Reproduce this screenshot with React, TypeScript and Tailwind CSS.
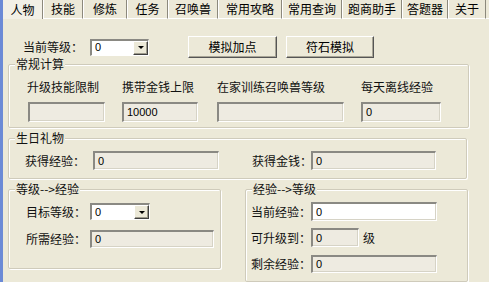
import React from 'react'

const font = "font-['Noto_Sans_CJK_SC',sans-serif]"

const tabs = [
  { label: '人物', w: 'w-[40px]' },
  { label: '技能', w: 'w-[40px]' },
  { label: '修炼', w: 'w-[44px]' },
  { label: '任务', w: 'w-[41px]' },
  { label: '召唤兽', w: 'w-[50px]' },
  { label: '常用攻略', w: 'w-[64px]' },
  { label: '常用查询', w: 'w-[60px]' },
  { label: '跑商助手', w: 'w-[60px]' },
  { label: '答题器', w: 'w-[46px]' },
  { label: '关于', w: 'w-[38px]' },
]

const Field = ({ className, value, white }: { className: string; value?: string; white?: boolean }) => (
  <div
    className={`${className} flex items-center pl-[3px] border-t-2 border-l-2 border-t-[#8a8983] border-l-[#8a8983] border-b border-r border-b-white border-r-white shadow-[inset_-1px_-1px_0_#d6d3c6] font-['Liberation_Sans',sans-serif] text-[11px] text-black ${white ? 'bg-white' : 'bg-[#eeebe1]'}`}
  >
    {value}
  </div>
)

const Combo = ({ className }: { className: string }) => (
  <div className={`${className} flex bg-white border-t-2 border-l-2 border-t-[#8a8983] border-l-[#8a8983] border-b border-r border-b-white border-r-white`}>
    <div className="flex-1 flex items-center pl-[3px] font-['Liberation_Sans',sans-serif] text-[11px]">0</div>
    <div className="w-[15px] flex items-center justify-center bg-[#ece9d8] border-t border-l border-white border-b border-r border-b-[#404040] border-r-[#404040] shadow-[inset_-1px_-1px_0_#9d9a8c]">
      <div className="w-0 h-0 border-l-[3px] border-r-[3px] border-t-[3px] border-l-transparent border-r-transparent border-t-black" />
    </div>
  </div>
)

const Button = ({ label, className }: { label: string; className: string }) => (
  <div
    className={`${className} h-[22px] flex items-center justify-center bg-[#ece9d8] border border-t-white border-l-white border-b-[#555] border-r-[#555] shadow-[inset_-1px_-1px_0_#a8a596] text-[12px] leading-none`}
  >
    {label}
  </div>
)

const Label = ({ children, className = '' }: { children: React.ReactNode; className?: string }) => (
  <span className={`${className} text-[12px] leading-[14px] text-[#111] whitespace-nowrap`}>{children}</span>
)

const Group = ({ title, className, children }: { title: string; className: string; children: React.ReactNode }) => (
  <fieldset className={`${className} border border-[#cfcbbb] rounded-[2px] shadow-[inset_1px_1px_0_#fff,1px_1px_0_#fff] px-0 pb-0`}>
    <legend className="ml-[6px] px-[1px] bg-[#ece9d8] text-[12px] leading-[14px] text-[#111]">{title}</legend>
    {children}
  </fieldset>
)

export default function App() {
  return (
    <div className={`${font} w-[489px] h-[282px] overflow-hidden bg-[#ece9d8] border-l-[3px] border-[#6b8ad6] text-black`}>
      <div className="flex h-[19px]">
        {tabs.map((t, i) => (
          <div
            key={t.label}
            className={`${t.w} shrink-0 flex items-center justify-center text-[12px] leading-none border-r border-r-[#8c897c] ${
              i === 0 ? 'bg-[#f2f0e6]' : 'border-l border-l-white border-b border-b-white'
            }`}
          >
            {t.label}
          </div>
        ))}
        <div className="flex-1 border-b border-b-white" />
      </div>

      <div className="flex flex-col">
        <div className="flex items-center mt-[17px] h-[22px]">
          <Label className="ml-[20px] w-[67px]">当前等级：</Label>
          <Combo className="w-[59px] h-[17px]" />
          <Button label="模拟加点" className="ml-[39px] w-[89px]" />
          <Button label="符石模拟" className="ml-[9px] w-[88px]" />
        </div>

        <Group title="常规计算" className="ml-[5px] w-[461px] h-[71px] -mt-[1px]">
          <div className="flex pl-[18px] pt-[9px]">
            <div className="w-[95px] flex flex-col">
              <Label>升级技能限制</Label>
              <Field className="mt-[8px] ml-px w-[77px] h-[20px]" />
            </div>
            <div className="w-[95px] flex flex-col">
              <Label>携带金钱上限</Label>
              <Field className="mt-[8px] w-[76px] h-[20px]" value="10000" />
            </div>
            <div className="w-[144px] flex flex-col">
              <Label>在家训练召唤兽等级</Label>
              <Field className="mt-[8px] w-[127px] h-[20px]" />
            </div>
            <div className="flex flex-col">
              <Label>每天离线经验</Label>
              <Field className="mt-[8px] w-[80px] h-[20px]" value="0" />
            </div>
          </div>
        </Group>

        <Group title="生日礼物" className="ml-[5px] w-[459px] h-[48px] mt-[3px]">
          <div className="flex items-center pl-[16px] pt-[6px]">
            <Label className="w-[68px]">获得经验：</Label>
            <Field className="w-[126px] h-[19px]" value="0" />
            <Label className="ml-[33px] w-[59px]">获得金钱：</Label>
            <Field className="w-[125px] h-[19px]" value="0" />
          </div>
        </Group>

        <div className="flex items-start mt-[3px]">
          <Group title="等级-->经验" className="ml-[5px] w-[213px] h-[87px]">
            <div className="flex flex-col pl-[17px] pt-[7px]">
              <div className="flex items-center">
                <Label className="w-[64px]">目标等级：</Label>
                <Combo className="w-[60px] h-[17px]" />
              </div>
              <div className="flex items-center mt-[10px]">
                <Label className="w-[64px]">所需经验：</Label>
                <Field className="w-[124px] h-[18px]" value="0" />
              </div>
            </div>
          </Group>
          <Group title="经验-->等级" className="ml-[24px] w-[223px] h-[100px]">
            <div className="flex flex-col pl-[5px] pt-[6px]">
              <div className="flex items-center">
                <Label className="w-[60px]">当前经验：</Label>
                <Field className="w-[126px] h-[19px]" value="0" white />
              </div>
              <div className="flex items-center mt-[7px]">
                <Label className="w-[60px]">可升级到：</Label>
                <Field className="w-[48px] h-[19px]" value="0" />
                <Label className="ml-[4px]">级</Label>
              </div>
              <div className="flex items-center mt-[8px]">
                <Label className="w-[60px]">剩余经验：</Label>
                <Field className="w-[126px] h-[18px]" value="0" />
              </div>
            </div>
          </Group>
        </div>
      </div>
    </div>
  )
}
